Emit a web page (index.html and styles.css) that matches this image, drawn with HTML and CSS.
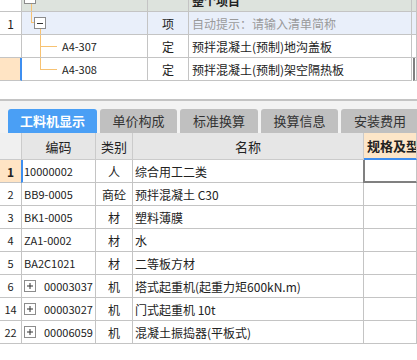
FILE: index.html
```html
<!DOCTYPE html>
<html lang="zh-CN">
<head>
  <meta charset="UTF-8" />
  <title>工料机显示</title>
  <link rel="stylesheet" href="styles.css">
</head>
<body>

  <div class="items">
    <div class="items-list">
      <div class="row head">
        <div class="c num"></div>
        <div class="c code">
          <svg width="40" height="22" viewBox="0 0 40 22">
            <line x1="9.5" y1="15" x2="9.5" y2="22" stroke="#f7c272" />
            <rect x="2.5" y="3.5" width="11" height="11" fill="#fff" stroke="#8c8c8c" />
            <line x1="5" y1="9.5" x2="11" y2="9.5" stroke="#333" />
          </svg>
        </div>
        <div class="c"></div>
        <div class="c name"><b>整个项目</b></div>
        <div class="c"></div>
      </div>
      <div class="row first">
        <div class="c num">1</div>
        <div class="c code">
          <svg width="40" height="22" viewBox="0 0 40 22">
            <line x1="9.5" y1="0" x2="9.5" y2="11" stroke="#f7c272" />
            <line x1="9.5" y1="10.5" x2="12" y2="10.5" stroke="#f7c272" />
            <line x1="18.5" y1="17" x2="18.5" y2="22" stroke="#f7c272" />
            <rect x="12.5" y="5.5" width="11" height="11" fill="#fff" stroke="#8c8c8c" />
            <line x1="15" y1="11.5" x2="21" y2="11.5" stroke="#333" />
          </svg>
        </div>
        <div class="c type">项</div>
        <div class="c name hint">自动提示：请输入清单简称</div>
        <div class="c"></div>
      </div>
      <div class="row">
        <div class="c num"></div>
        <div class="c code">
          <svg width="40" height="22" viewBox="0 0 40 22">
            <line x1="18.5" y1="0" x2="18.5" y2="22" stroke="#f7c272" />
            <line x1="18.5" y1="11.5" x2="35" y2="11.5" stroke="#f7c272" />
          </svg>
          A4-307
        </div>
        <div class="c type">定</div>
        <div class="c name">预拌混凝土(预制)地沟盖板</div>
        <div class="c"></div>
      </div>
      <div class="row">
        <div class="c num current"></div>
        <div class="c code">
          <svg width="40" height="22" viewBox="0 0 40 22">
            <line x1="18.5" y1="0" x2="18.5" y2="12" stroke="#f7c272" />
            <line x1="18.5" y1="11.5" x2="35" y2="11.5" stroke="#f7c272" />
          </svg>
          A4-308
        </div>
        <div class="c type">定</div>
        <div class="c name">预拌混凝土(预制)架空隔热板</div>
        <div class="c picked"></div>
      </div>
    </div>
  </div>

  <div class="panel">
    <div class="tabs">
      <div class="tab active">工料机显示</div>
      <div class="tab">单价构成</div>
      <div class="tab">标准换算</div>
      <div class="tab">换算信息</div>
      <div class="tab">安装费用</div>
    </div>

    <div class="grid">
      <div class="row head">
        <div class="c num"></div>
        <div class="c mid">编码</div>
        <div class="c mid">类别</div>
        <div class="c mid">名称</div>
        <div class="c spec">规格及型</div>
      </div>
      <div class="row">
        <div class="c num current"><b>1</b></div>
        <div class="c code focus">10000002</div>
        <div class="c mid">人</div>
        <div class="c name">综合用工二类</div>
        <div class="c picked"></div>
      </div>
      <div class="row">
        <div class="c num">2</div>
        <div class="c code">BB9-0005</div>
        <div class="c mid">商砼</div>
        <div class="c name">预拌混凝土 C30</div>
        <div class="c"></div>
      </div>
      <div class="row">
        <div class="c num">3</div>
        <div class="c code">BK1-0005</div>
        <div class="c mid">材</div>
        <div class="c name">塑料薄膜</div>
        <div class="c"></div>
      </div>
      <div class="row">
        <div class="c num">4</div>
        <div class="c code">ZA1-0002</div>
        <div class="c mid">材</div>
        <div class="c name">水</div>
        <div class="c"></div>
      </div>
      <div class="row">
        <div class="c num">5</div>
        <div class="c code">BA2C1021</div>
        <div class="c mid">材</div>
        <div class="c name">二等板方材</div>
        <div class="c"></div>
      </div>
      <div class="row">
        <div class="c num">6</div>
        <div class="c code">
          <svg class="plus" width="18" height="14" viewBox="0 0 18 14">
            <rect x="0.5" y="1.5" width="11" height="11" fill="#fff" stroke="#8c8c8c" />
            <line x1="3" y1="7" x2="9" y2="7" stroke="#333" />
            <line x1="6" y1="4" x2="6" y2="10" stroke="#333" />
          </svg>
          00003037
        </div>
        <div class="c mid">机</div>
        <div class="c name">塔式起重机(起重力矩600kN.m)</div>
        <div class="c"></div>
      </div>
      <div class="row">
        <div class="c num">14</div>
        <div class="c code">
          <svg class="plus" width="18" height="14" viewBox="0 0 18 14">
            <rect x="0.5" y="1.5" width="11" height="11" fill="#fff" stroke="#8c8c8c" />
            <line x1="3" y1="7" x2="9" y2="7" stroke="#333" />
            <line x1="6" y1="4" x2="6" y2="10" stroke="#333" />
          </svg>
          00003027
        </div>
        <div class="c mid">机</div>
        <div class="c name">门式起重机 10t</div>
        <div class="c"></div>
      </div>
      <div class="row">
        <div class="c num">22</div>
        <div class="c code">
          <svg class="plus" width="18" height="14" viewBox="0 0 18 14">
            <rect x="0.5" y="1.5" width="11" height="11" fill="#fff" stroke="#8c8c8c" />
            <line x1="3" y1="7" x2="9" y2="7" stroke="#333" />
            <line x1="6" y1="4" x2="6" y2="10" stroke="#333" />
          </svg>
          00006059
        </div>
        <div class="c mid">机</div>
        <div class="c name">混凝土振捣器(平板式)</div>
        <div class="c"></div>
      </div>
    </div>
  </div>

</body>
</html>
```

FILE: styles.css
```css
body {
  margin: 0;
  width: 417px;
  overflow: hidden;
  font-family: "Noto Sans CJK SC", sans-serif;
  font-size: 12px;
  color: #222;
  background: #fff;
}

.row {
  display: grid;
  height: 23px;
}

.c {
  box-sizing: border-box;
  display: flex;
  align-items: center;
  white-space: nowrap;
  overflow: hidden;
  border-right: 1px solid #c4c4c4;
  border-bottom: 1px solid #c4c4c4;
}

.c svg {
  flex: none;
}

.num {
  justify-content: center;
}

.num.current {
  background: #ffe4c4;
}

/* top: item tree */
.items {
  height: 81px;
  overflow: hidden;
}

.items-list {
  margin-top: -11px;
}

.items .row {
  grid-template-columns: 22px 126px 41px 223px 1fr;
}

.items .head .c {
  background: #dde3dd;
}

.items .head .num {
  background: #fff;
}

.items .first .c {
  background: #e9effa;
}

.items .first .num {
  background: #fff;
}

.items .code {
  font-size: 11px;
}

.items .num.current {
  border-right: 2px solid #3d8ef0;
}

.items .type {
  justify-content: center;
}

.items .name {
  padding-left: 3px;
}

.items .hint {
  color: #9a9a9a;
}

.items .picked {
  border-left: 2px solid #808080;
  margin-left: 1px;
}

/* bottom: resources */
.panel {
  margin-top: 18px;
  border-top: 2px solid #c4c4c4;
}

.tabs {
  display: flex;
  gap: 3px;
  padding: 8px 0 0 8px;
  background: #f3f3f3;
}

.tab {
  flex: none;
  width: 77px;
  height: 24px;
  line-height: 24px;
  text-align: center;
  font-size: 13px;
  color: #333;
  background: #c0c0c0;
  border-radius: 3px 3px 0 0;
}

.tab:nth-child(3),
.tab:nth-child(5) {
  width: 78px;
}

.tab.active {
  width: 89px;
  background: #4a9ff5;
  color: #fff;
  font-weight: bold;
}

.grid .row {
  grid-template-columns: 22px 74px 37px 231px 1fr;
}

.grid .head {
  height: 27px;
}

.grid .head .c {
  background: #e6e6e6;
  border-color: #cbcbcb;
  font-size: 13px;
}

.grid .head .num {
  background: #f0f0f0;
}

.grid .mid {
  justify-content: center;
}

.grid .head .spec {
  background: #fde6c8;
  border-bottom: 2px solid #3d8ef0;
  padding-left: 3px;
  font-weight: bold;
  color: #222;
}

.grid .code {
  padding-left: 2px;
  font-size: 11px;
}

.grid .code.focus {
  border-left: 2px solid #3d8ef0;
  margin-left: -1px;
  padding-left: 1px;
}

.grid .num {
  font-size: 11px;
}

.grid .num b {
  font-size: 12px;
}

.grid .name {
  padding-left: 2px;
}

.grid .picked {
  border-left: 2px solid #808080;
  border-bottom: 2px solid #808080;
  margin-left: -1px;
}

.plus {
  margin-right: 2px;
}
```
